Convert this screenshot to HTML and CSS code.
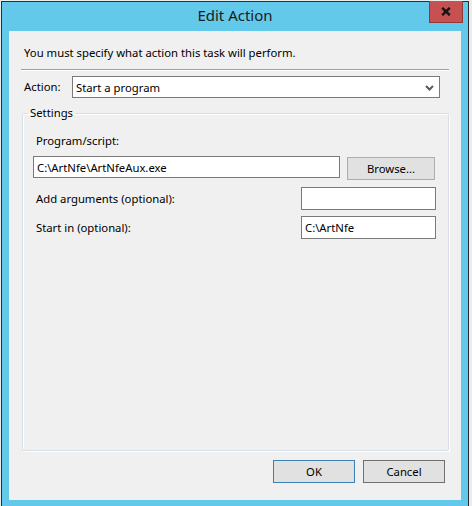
FILE: index.html
```html
<!DOCTYPE html>
<html>
<head>
<meta charset="utf-8">
<link rel="stylesheet" href="styles.css">
</head>
<body>
<div class="window">
  <div class="titlebar">
    <span class="spacer"></span>
    <span class="title">Edit Action</span>
    <button class="close" aria-label="Close">
      <svg width="10" height="9" viewBox="0 0 10 9"><path d="M1.2 0.8 L8.8 8.2 M8.8 0.8 L1.2 8.2" stroke="#151515" stroke-width="2.4" fill="none"/></svg>
    </button>
  </div>
  <div class="client">
    <p class="intro">You must specify what action this task will perform.</p>
    <div class="sep"></div>
    <div class="action-row">
      <span class="lbl">Action:</span>
      <div class="combo">
        <span>Start a program</span>
        <svg width="9" height="6" viewBox="0 0 9 6"><path d="M1 1 L4.5 4.5 L8 1" stroke="#5a5a5a" stroke-width="2" fill="none"/></svg>
      </div>
    </div>
    <fieldset class="group">
      <legend>Settings</legend>
      <div class="lbl">Program/script:</div>
      <div class="prog-row">
        <div class="input prog">C:\ArtNfe\ArtNfeAux.exe</div>
        <button class="btn browse">Browse...</button>
      </div>
      <div class="opt-row args">
        <span class="lbl">Add arguments (optional):</span>
        <div class="input small"></div>
      </div>
      <div class="opt-row start">
        <span class="lbl">Start in (optional):</span>
        <div class="input small">C:\ArtNfe</div>
      </div>
    </fieldset>
    <div class="buttons">
      <button class="btn ok">OK</button>
      <button class="btn cancel">Cancel</button>
    </div>
  </div>
</div>
</body>
</html>
```
FILE: styles.css
```css
* { box-sizing: border-box; }
html, body { margin: 0; padding: 0; }
body {
  background: #ececec;
  width: 472px;
  height: 506px;
  overflow: hidden;
  font-family: "Noto Sans", "Open Sans", sans-serif;
  font-size: 11.3px;
  color: #000;
}
.window {
  margin: 1px 0 0 1px;
  width: 468px;
  height: 506px;
  border: 1px solid #2e2e2e;
  background: #63c9ea;
  padding: 0 7px 5px;
  display: flex;
  flex-direction: column;
}
.titlebar {
  height: 29px;
  display: grid;
  grid-template-columns: 1fr auto 1fr;
  margin: 0 -7px;
}
.title {
  font-size: 15px;
  line-height: 20px;
  margin-top: 3px;
  color: #1b1b1b;
}
.close {
  justify-self: end;
  align-self: start;
  margin: -1px 5px 0 0;
  width: 34px;
  height: 22px;
  padding: 0;
  background: #c75050;
  border: 1px solid #8e3a3a;
  border-top: none;
  display: flex;
  align-items: center;
  justify-content: center;
}
.client {
  background: #f0f0f0;
  width: 452px;
  height: 469px;
  padding-top: 14px;
}
.intro {
  margin: 0 0 0 15px;
  line-height: 16px;
}
.sep {
  margin: 8px 12px 0 12px;
  height: 2px;
  border-top: 1px solid #a0a0a0;
  border-bottom: 1px solid #ffffff;
}
.action-row {
  margin: 5px 0 0 15px;
  display: flex;
  align-items: center;
}
.action-row .lbl {
  width: 48px;
}
.combo {
  width: 368px;
  height: 22px;
  border: 1px solid #7a7a7a;
  background: #fff;
  display: flex;
  align-items: center;
  justify-content: space-between;
  padding: 1px 5px 0 3px;
  line-height: 20px;
}
.group {
  margin: 7px 0 0 13px;
  width: 427px;
  height: 346px;
  border: 1px solid #d5dfe5;
  border-radius: 2px;
  box-shadow: inset 1px 1px 0 #fff, 1px 1px 0 #fff;
  padding: 12px 12px 0 10px;
}
.group legend {
  padding: 0 2px;
  margin-left: -5px;
  line-height: 16px;
}
.lbl { line-height: 16px; }
.group > .lbl { margin-left: 3px; }
.prog-row {
  margin-top: 7px;
  display: flex;
  align-items: flex-start;
  gap: 7px;
}
.input {
  background: #fff;
  border: 1px solid #7a7a7a;
  height: 23px;
  line-height: 21px;
  padding-left: 3px;
  white-space: nowrap;
}
.input.prog { width: 307px; height: 22px; line-height: 21px; }
.btn {
  font-family: inherit;
  font-size: 11.3px;
  color: #000;
  background: #e1e1e1;
  border: 1px solid #adadad;
  height: 23px;
  padding: 0;
  line-height: 21px;
}
.browse { width: 88px; margin-top: 1px; }
.opt-row {
  display: flex;
  align-items: center;
  justify-content: space-between;
  padding-left: 3px;
  width: 403px;
}
.opt-row.args { margin-top: 7px; }
.opt-row.start { margin-top: 6px; }
.input.small { width: 135px; }
.buttons {
  margin: 9px 16px 0 0;
  display: flex;
  justify-content: flex-end;
  gap: 8px;
}
.buttons .btn { width: 82px; }
.ok { border-color: #3c7fb1; }
.cancel { border-color: #707070; }
```
